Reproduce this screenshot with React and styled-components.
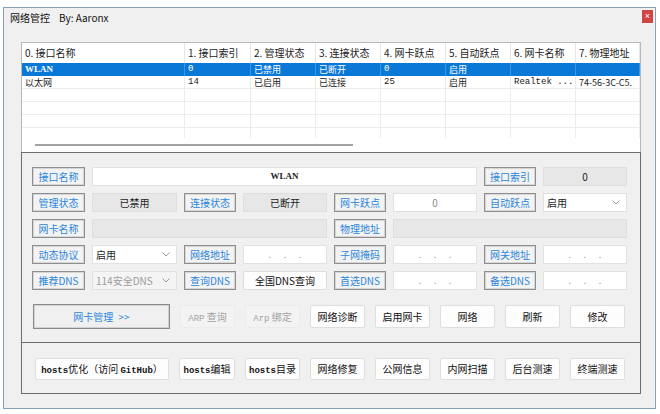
import React from "react";
import styled, { createGlobalStyle, css } from "styled-components";

const Global = createGlobalStyle`
  html, body { margin: 0; padding: 0; background: #ffffff; }
  body { font-family: "Noto Sans CJK SC", "Liberation Sans", sans-serif; color: #1a1a1a; }
  * { box-sizing: border-box; }
`;

const Page = styled.div`
  padding: 7px 0 0 3px;
`;

const Window = styled.div`
  width: 653px;
  height: 402px;
  border: 1px solid #86a2b8;
  background: #f0f0f0;
  display: flex;
  flex-direction: column;
`;

const TitleBar = styled.div`
  height: 20px;
  display: flex;
  align-items: center;
  justify-content: space-between;
  padding-left: 6px;
  padding-right: 2px;
`;

const Title = styled.div`
  font-size: 10px;
  line-height: 14px;
  display: flex;
  gap: 9px;
  color: #111;
`;

const CloseBtn = styled.div`
  align-self: flex-start;
  margin-top: 2px;
  width: 11px;
  height: 13px;
  background: #cf4545;
  color: #fff;
  font-family: "Liberation Sans", sans-serif;
  font-size: 9px;
  line-height: 13px;
  text-align: center;
`;

const Content = styled.div`
  padding: 14px 14px 0 17px;
  display: flex;
  flex-direction: column;
`;

const COLS = "163px 66px 65px 65px 65px 65px 65px 64px";

const ListView = styled.div`
  width: 620px;
  height: 110px;
  border: 1px solid #b9b9b9;
  border-bottom: none;
  background: #fff;
  display: flex;
  flex-direction: column;
`;

const HeaderRow = styled.div`
  display: grid;
  grid-template-columns: ${COLS};
  height: 20px;
`;

const HeaderCell = styled.div`
  font-size: 10px;
  line-height: 20px;
  padding-left: 3px;
  box-shadow: inset -1px 0 0 #e6e6e6;
  white-space: nowrap;
  overflow: hidden;
  color: #1a1a1a;
`;

const Body = styled.div`
  height: 75px;
  overflow: hidden;
`;

const Row = styled.div`
  display: grid;
  grid-template-columns: ${COLS};
  height: 13px;
  ${(p) =>
    p.$selected &&
    css`
      background: #0a78d7;
      color: #fff;
    `}
`;

const Cell = styled.div`
  font-size: 9px;
  line-height: 13px;
  height: 13px;
  padding-left: 3px;
  white-space: nowrap;
  overflow: hidden;
  box-shadow: ${(p) =>
    p.$sel ? "inset -1px 0 0 #3f95df" : "inset -1px -1px 0 #ececec"};
  font-family: ${(p) =>
    p.$mono
      ? '"Liberation Mono", monospace'
      : p.$serif
      ? '"Liberation Serif", serif'
      : '"Noto Sans CJK SC", sans-serif'};
  font-weight: ${(p) => (p.$bold ? 700 : 400)};
`;

const ScrollArea = styled.div`
  height: 14px;
  display: flex;
  align-items: center;
  padding-left: 13px;
`;

const ScrollThumb = styled.div`
  width: 318px;
  height: 2px;
  background: #a3a3a3;
`;

const FormBox = styled.div`
  width: 620px;
  border: 1px solid #6c6c6c;
  padding: 14px 0 13px 10px;
  display: flex;
  flex-direction: column;
`;

const FormGrid = styled.div`
  display: grid;
  grid-template-columns: 53px 85px 52px 84px 52px 84px 52px 84px;
  grid-auto-rows: 19px;
  column-gap: 7px;
  row-gap: 7px;
`;

const Label = styled.div`
  border: 1px solid #8e8e8e;
  box-shadow: inset 0 0 0 1px #d6d6d6;
  background: #f3f3f3;
  color: #2c86dc;
  font-size: 10px;
  line-height: 17px;
  text-align: center;
  white-space: nowrap;
`;

const fieldBase = css`
  font-size: 10px;
  line-height: 17px;
  white-space: nowrap;
  overflow: hidden;
  ${(p) => p.$span && css`grid-column: span ${p.$span};`}
`;

const GrayBox = styled.div`
  ${fieldBase}
  background: #e7e7e7;
  border: 1px solid #dedede;
  text-align: center;
  color: #1e1e1e;
`;

const Input = styled.div`
  ${fieldBase}
  background: #fff;
  border: 1px solid #e1e1e1;
  text-align: center;
  color: ${(p) => (p.$muted ? "#8a8a8a" : "#1e1e1e")};
  font-family: ${(p) => (p.$serif ? '"Liberation Serif", serif' : "inherit")};
  font-weight: ${(p) => (p.$serif ? 700 : 400)};
  font-size: ${(p) => (p.$serif ? "9px" : "10px")};
`;

const IpBox = styled.div`
  ${fieldBase}
  background: #fff;
  border: 1px solid #e1e1e1;
  display: flex;
  justify-content: space-evenly;
  align-items: center;
  padding: 0 12px;
  color: #9a9a9a;
  font-size: 9px;
`;

const Select = styled.div`
  ${fieldBase}
  background: ${(p) => (p.$disabled ? "#f4f4f4" : "#fff")};
  border: 1px solid #e1e1e1;
  display: flex;
  align-items: center;
  justify-content: space-between;
  padding: 0 6px 0 3px;
  color: ${(p) => (p.$disabled ? "#9b9b9b" : "#1e1e1e")};
`;

const Chevron = () => (
  <svg width="8" height="5" viewBox="0 0 8 5">
    <path d="M0.5 0.5 L4 4 L7.5 0.5" fill="none" stroke="#9a9a9a" strokeWidth="1" />
  </svg>
);

const GridButton = styled.div`
  ${fieldBase}
  background: #fdfdfd;
  border: 1px solid #dcdcdc;
  border-radius: 2px;
  text-align: center;
  color: #111;
`;

const ButtonRow = styled.div`
  margin-top: 14px;
  padding-left: 1px;
  display: grid;
  grid-template-columns: 137px repeat(7, 55px);
  column-gap: 10px;
  align-items: center;
  height: 25px;
`;

const Button = styled.div`
  height: ${(p) => p.$h || 23}px;
  background: ${(p) => (p.$disabled ? "#f3f3f3" : "#fdfdfd")};
  border: 1px solid ${(p) => (p.$disabled ? "#ececec" : "#dedede")};
  border-radius: 2px;
  color: ${(p) => (p.$disabled ? "#a2a2a2" : "#111")};
  font-size: 10px;
  line-height: ${(p) => (p.$h || 23) - 2}px;
  text-align: center;
  white-space: nowrap;
  overflow: hidden;
`;

const MonoPart = styled.span`
  font-family: "Liberation Mono", monospace;
  font-size: ${(p) => p.$size || 9}px;
  font-weight: ${(p) => (p.$bold ? 700 : 400)};
`;

const ManageButton = styled.div`
  height: 25px;
  border: 1px solid #8a8a8a;
  box-shadow: inset 0 0 0 1px #d2d2d2;
  background: #f0f0f0;
  color: #2c86dc;
  font-size: 10px;
  line-height: 23px;
  text-align: center;
  word-spacing: 3px;
`;

const ToolBox = styled.div`
  width: 620px;
  border: 1px solid #6c6c6c;
  border-top: none;
  padding: 15px 0 13px 13px;
  display: grid;
  grid-template-columns: 134px 56px repeat(6, 55px);
  column-gap: 10px;
`;

const Dots = () => (
  <>
    <span>.</span>
    <span>.</span>
    <span>.</span>
  </>
);

const headers = [
  "0. 接口名称",
  "1. 接口索引",
  "2. 管理状态",
  "3. 连接状态",
  "4. 网卡跃点",
  "5. 自动跃点",
  "6. 网卡名称",
  "7. 物理地址",
];

export default function App() {
  return (
    <>
      <Global />
      <Page>
        <Window>
          <TitleBar>
            <Title>
              <span>网络管控</span>
              <span>By: Aaronx</span>
            </Title>
            <CloseBtn>×</CloseBtn>
          </TitleBar>
          <Content>
            <ListView>
              <HeaderRow>
                {headers.map((h) => (
                  <HeaderCell key={h}>{h}</HeaderCell>
                ))}
              </HeaderRow>
              <Body>
                <Row $selected>
                  <Cell $sel $serif $bold>WLAN</Cell>
                  <Cell $sel $mono>0</Cell>
                  <Cell $sel>已禁用</Cell>
                  <Cell $sel>已断开</Cell>
                  <Cell $sel $mono>0</Cell>
                  <Cell $sel>启用</Cell>
                  <Cell $sel />
                  <Cell $sel />
                </Row>
                <Row>
                  <Cell>以太网</Cell>
                  <Cell $mono>14</Cell>
                  <Cell>已启用</Cell>
                  <Cell>已连接</Cell>
                  <Cell $mono>25</Cell>
                  <Cell>启用</Cell>
                  <Cell $mono>Realtek ...</Cell>
                  <Cell>74-56-3C-C5.</Cell>
                </Row>
                {[0, 1, 2, 3].map((r) => (
                  <Row key={r}>
                    {headers.map((h) => (
                      <Cell key={h} />
                    ))}
                  </Row>
                ))}
              </Body>
              <ScrollArea>
                <ScrollThumb />
              </ScrollArea>
            </ListView>

            <FormBox>
              <FormGrid>
                <Label>接口名称</Label>
                <Input $span={5} $serif>WLAN</Input>
                <Label>接口索引</Label>
                <GrayBox>0</GrayBox>

                <Label>管理状态</Label>
                <GrayBox>已禁用</GrayBox>
                <Label>连接状态</Label>
                <GrayBox>已断开</GrayBox>
                <Label>网卡跃点</Label>
                <Input $muted>0</Input>
                <Label>自动跃点</Label>
                <Select>
                  <span>启用</span>
                  <Chevron />
                </Select>

                <Label>网卡名称</Label>
                <GrayBox $span={3} />
                <Label>物理地址</Label>
                <GrayBox $span={3} />

                <Label>动态协议</Label>
                <Select>
                  <span>启用</span>
                  <Chevron />
                </Select>
                <Label>网络地址</Label>
                <IpBox>
                  <Dots />
                </IpBox>
                <Label>子网掩码</Label>
                <IpBox>
                  <Dots />
                </IpBox>
                <Label>网关地址</Label>
                <IpBox>
                  <Dots />
                </IpBox>

                <Label>推荐DNS</Label>
                <Select $disabled>
                  <span>114安全DNS</span>
                  <Chevron />
                </Select>
                <Label>查询DNS</Label>
                <GridButton>全国DNS查询</GridButton>
                <Label>首选DNS</Label>
                <IpBox>
                  <Dots />
                </IpBox>
                <Label>备选DNS</Label>
                <IpBox>
                  <Dots />
                </IpBox>
              </FormGrid>

              <ButtonRow>
                <ManageButton>网卡管理 &gt;&gt;</ManageButton>
                <Button $disabled>
                  <MonoPart>ARP</MonoPart> 查询
                </Button>
                <Button $disabled>
                  <MonoPart>Arp</MonoPart> 绑定
                </Button>
                <Button>网络诊断</Button>
                <Button>启用网卡</Button>
                <Button>网络</Button>
                <Button>刷新</Button>
                <Button>修改</Button>
              </ButtonRow>
            </FormBox>

            <ToolBox>
              <Button $h={22}>
                <MonoPart $bold>hosts</MonoPart>优化（访问 <MonoPart $bold>GitHub</MonoPart>）
              </Button>
              <Button $h={22}>
                <MonoPart $bold>hosts</MonoPart>编辑
              </Button>
              <Button $h={22}>
                <MonoPart $bold>hosts</MonoPart>目录
              </Button>
              <Button $h={22}>网络修复</Button>
              <Button $h={22}>公网信息</Button>
              <Button $h={22}>内网扫描</Button>
              <Button $h={22}>后台测速</Button>
              <Button $h={22}>终端测速</Button>
            </ToolBox>
          </Content>
        </Window>
      </Page>
    </>
  );
}
